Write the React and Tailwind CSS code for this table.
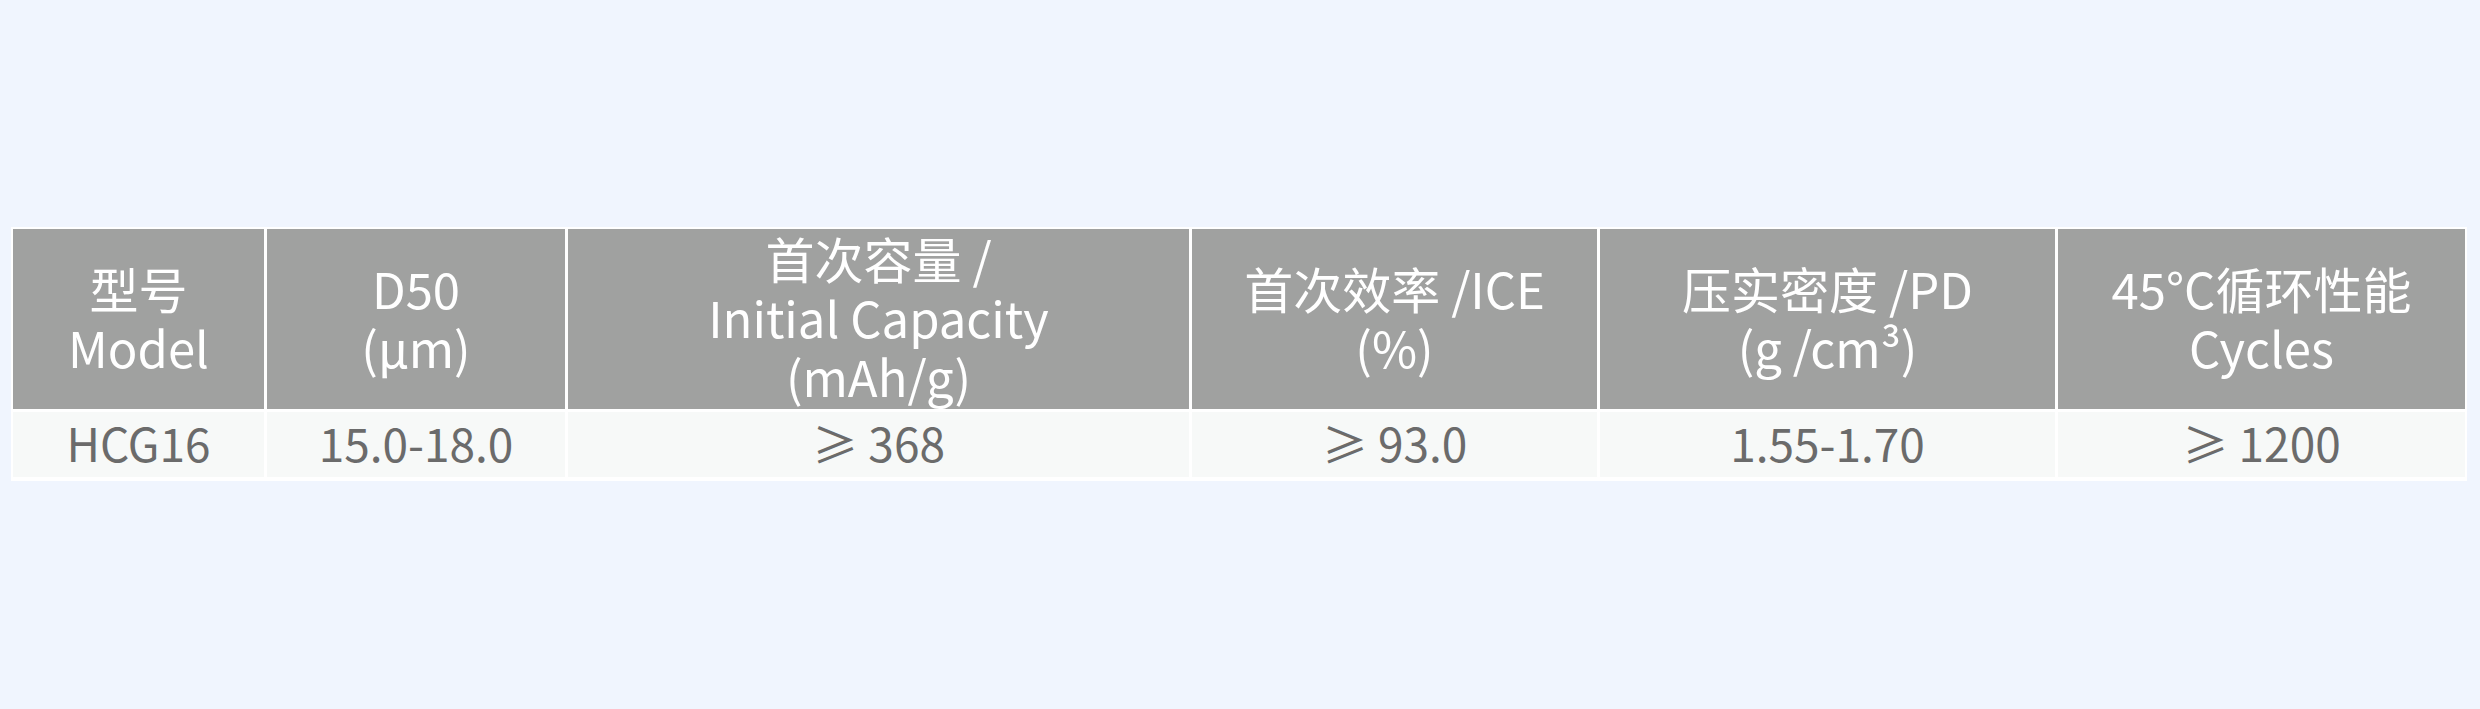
const headers = [
  ["型号", "Model"],
  ["D50", "(μm)"],
  ["首次容量 /", "Initial Capacity", "(mAh/g)"],
  ["首次效率 /ICE", "(%)"],
  ["压实密度 /PD", "(g /cm³)"],
  ["45°C循环性能", "Cycles"],
];

const row = ["HCG16", "15.0-18.0", "≥ 368", "≥ 93.0", "1.55-1.70", "≥ 1200"];

export default function App() {
  return (
    <div
      className="min-h-[709px] bg-[#f0f5fe] pt-[227px] pl-[11px]"
      style={{ fontFamily: '"Noto Sans CJK SC", "Noto Sans", sans-serif' }}
    >
      <div className="inline-grid grid-cols-[251px_298px_621px_405px_455px_407px] grid-rows-[180px_65px] gap-[3px] bg-white p-[2px] pb-[4px]">
        {headers.map((lines, i) => (
          <div
            key={i}
            className="flex flex-col items-center justify-center overflow-hidden bg-[#a0a1a0] pb-[5px] text-center text-[49px] leading-[59px] text-white"
          >
            {lines.map((l, j) => (
              <span key={j} className="whitespace-nowrap">
                {l}
              </span>
            ))}
          </div>
        ))}
        {row.map((v, i) => (
          <div
            key={i}
            className="flex items-center justify-center bg-[#f7f9f8] pb-[5px] text-[46px] leading-none text-[#6b6b6b]"
          >
            {v}
          </div>
        ))}
      </div>
    </div>
  );
}
